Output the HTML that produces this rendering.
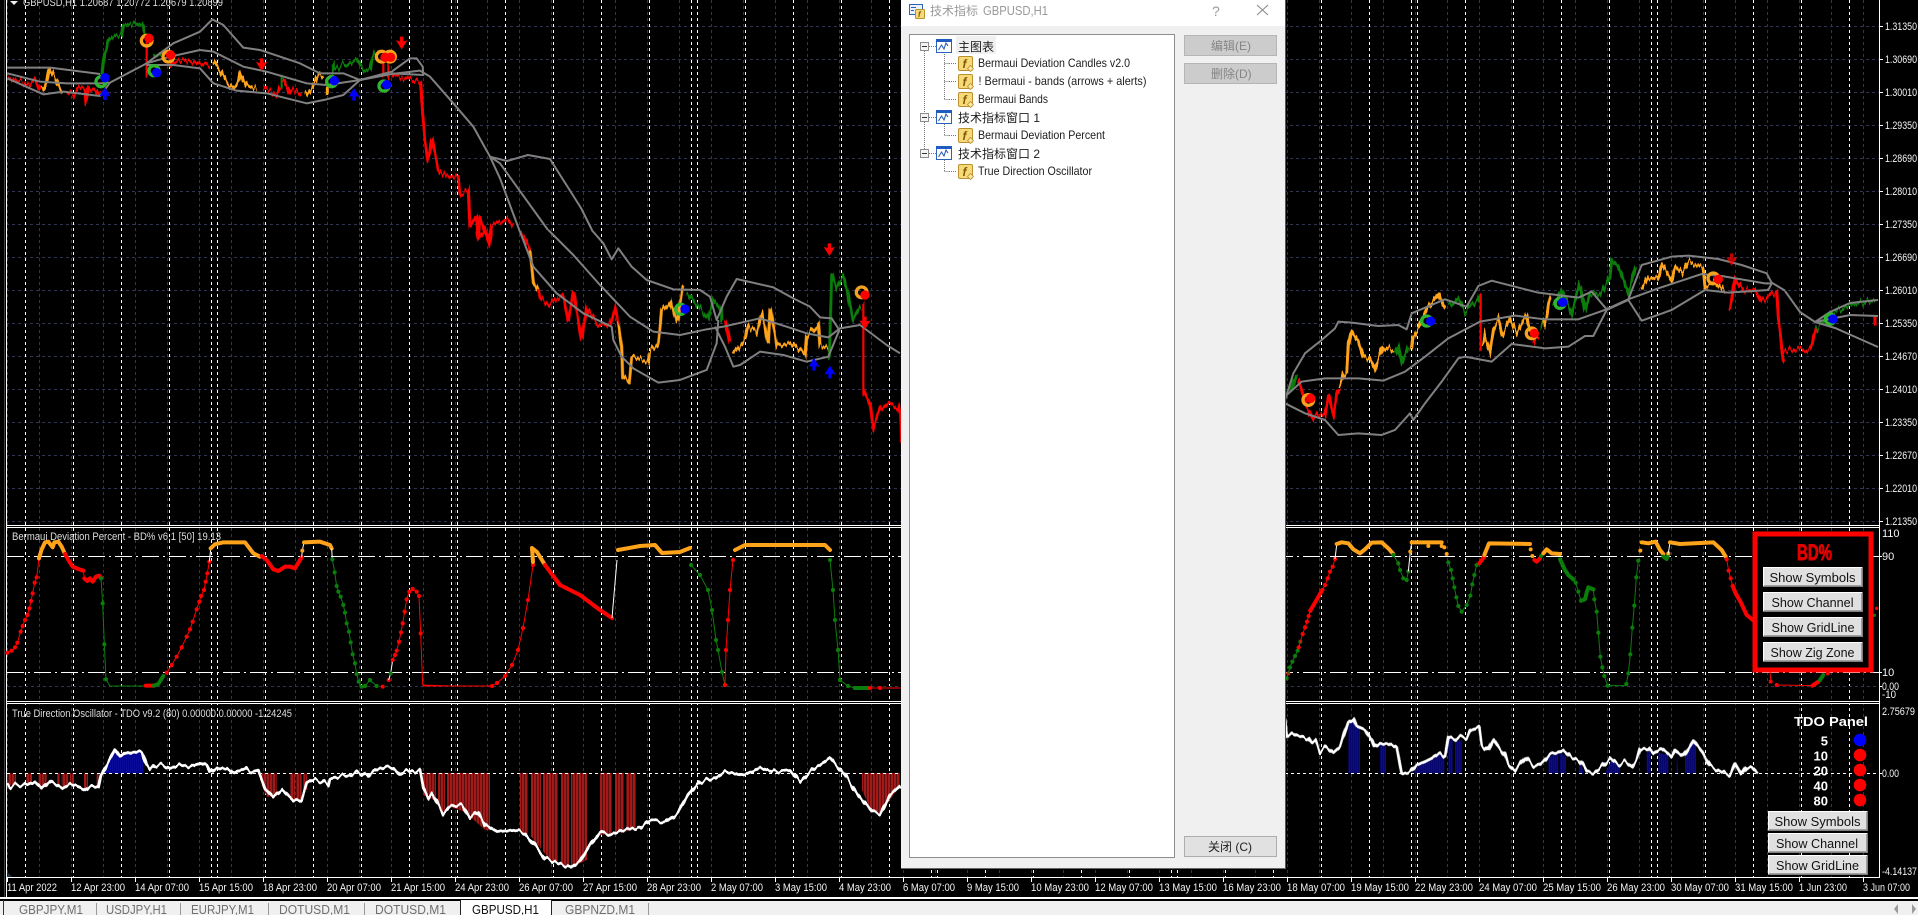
<!DOCTYPE html>
<html lang="zh"><head><meta charset="utf-8"><title>GBPUSD,H1</title>
<style>
html,body{margin:0;padding:0;background:#000;overflow:hidden}
svg{display:block}
text{font-family:"Liberation Sans","Noto Sans CJK SC",sans-serif}
.a{font-size:11px;fill:#f4f4f4}
.h{font-size:11px;fill:#dcdcdc}
.tr{font-size:12px;fill:#1c1c1c}
.bt{font-size:13px;fill:#111}
.pb{font-size:13px;font-weight:bold;fill:#fff}
.tb{font-size:13px;fill:#6f6f6f}
.c{fill:none;stroke-width:9;stroke-linejoin:miter}
.v{fill:none;stroke-width:6.5}
.cT{fill:none;stroke-width:3}
.r{stroke:#f00}.o{stroke:#ffa31a}.g{stroke:#0b7d0b}.w{stroke:#fff}
.b{fill:none;stroke:#808080;stroke-width:6;stroke-linejoin:round}
.bT{fill:none;stroke:#808080;stroke-width:2}
.t{fill:none;stroke-width:3}
.T{fill:none;stroke-width:1}
.k{fill:none;stroke-width:12;stroke-linecap:round;stroke-linejoin:round}
.K{fill:none;stroke-width:4;stroke-linecap:round;stroke-linejoin:round}
.mr{marker:url(#mr)}.mg{marker:url(#mg)}.mo{marker:url(#mo)}
.wl{fill:none;stroke:#fff;stroke-width:8.5;stroke-linejoin:round}
.wlT{fill:none;stroke:#fff;stroke-width:2.8;stroke-linejoin:round}
</style></head><body>
<svg xmlns="http://www.w3.org/2000/svg" width="1918" height="915" viewBox="0 0 1918 915">
<defs>
<pattern id="vb" patternUnits="userSpaceOnUse" x="7" y="0" width="32" height="6"><rect width="1" height="3" fill="#30364f"/></pattern>
<pattern id="hb" patternUnits="userSpaceOnUse" x="0" y="26" width="6" height="33"><rect width="3" height="1" fill="#30364f"/></pattern>
<pattern id="vw" patternUnits="userSpaceOnUse" x="25" y="0" width="48" height="6"><rect width="1" height="3" fill="#fff"/></pattern>
<pattern id="vw2" patternUnits="userSpaceOnUse" x="211" y="0" width="240" height="6"><rect width="1" height="3" fill="#fff"/></pattern>
<pattern id="tk" patternUnits="userSpaceOnUse" x="7" y="877" width="64" height="5"><rect width="1" height="5" fill="#fff"/></pattern>
<pattern id="rb" patternUnits="userSpaceOnUse" width="3" height="4"><rect width="2" height="4" fill="#a01a1a"/><rect x="2" width="1" height="4" fill="#5a0e0e"/></pattern>
<pattern id="bb" patternUnits="userSpaceOnUse" width="2" height="4"><rect width="2" height="4" fill="#0a0a9a"/><rect x="1" width="1" height="4" fill="#06066e"/></pattern>
<pattern id="rbz" patternUnits="userSpaceOnUse" width="9" height="12"><rect width="6" height="12" fill="#a01a1a"/><rect x="6" width="3" height="12" fill="#5a0e0e"/></pattern>
<pattern id="bbz" patternUnits="userSpaceOnUse" width="6" height="12"><rect width="3" height="12" fill="#0a0a9a"/><rect x="3" width="3" height="12" fill="#06066e"/></pattern>
<marker id="mr" markerWidth="5" markerHeight="5" refX="2.5" refY="2.5"><circle cx="2.5" cy="2.5" r="2.1" fill="#f00"/></marker>
<marker id="mg" markerWidth="5" markerHeight="5" refX="2.5" refY="2.5"><circle cx="2.5" cy="2.5" r="2.1" fill="#0b7d0b"/></marker>
<marker id="mo" markerWidth="5" markerHeight="5" refX="2.5" refY="2.5"><circle cx="2.5" cy="2.5" r="2.1" fill="#ffa31a"/></marker>
<filter id="j" filterUnits="userSpaceOnUse" x="0" y="0" width="1918" height="530" color-interpolation-filters="sRGB"><feTurbulence type="fractalNoise" baseFrequency="0.45 0.004" numOctaves="1" seed="4"/><feColorMatrix type="matrix" values="1 0 0 0 0  0 0 0 0 .5  0 0 0 0 .5  0 0 0 0 1" result="n"/><feDisplacementMap in="SourceGraphic" in2="n" scale="16" xChannelSelector="G" yChannelSelector="R"/></filter>
<filter id="j2" filterUnits="userSpaceOnUse" x="0" y="700" width="1918" height="180" color-interpolation-filters="sRGB"><feTurbulence type="fractalNoise" baseFrequency="0.22 0.004" numOctaves="1" seed="9"/><feColorMatrix type="matrix" values="1 0 0 0 0  0 0 0 0 .5  0 0 0 0 .5  0 0 0 0 1" result="n"/><feDisplacementMap in="SourceGraphic" in2="n" scale="9" xChannelSelector="G" yChannelSelector="R"/></filter>
<g id="bu"><circle r="15" fill="none" stroke="#2fb52f" stroke-width="10"/></g>
<g id="be"><circle r="16" fill="none" stroke="#f5a31e" stroke-width="10"/></g>
<path id="ad" fill="#f00" d="M-5,-20H5V-6L17,-9L0,18L-17,-9L-5,-6Z"/>
<path id="au" fill="#00f" d="M-5,20H5V6L17,9L0,-18L-17,9L-5,6Z"/>
<g id="btn"><rect width="100" height="20" fill="#808080"/><rect width="99" height="19" fill="#fff"/><rect x="1" y="1" width="98" height="18" fill="#a0a0a0"/><rect x="1" y="1" width="97" height="17" fill="#e0e0e0"/></g>
<g id="fi"><rect x="0.5" y="0.5" width="14" height="14" rx="1.5" fill="#f8d977" stroke="#b8912e"/><text x="4.5" y="12" font-size="12" font-style="italic" font-weight="bold" fill="#7d5d0c">f</text><path d="M12.5,9.5l3,3l-3,3l-3,-3z" fill="#fbe8a8" stroke="#b8912e" stroke-width=".8"/></g>
<g id="fo"><rect x="0.5" y="0.5" width="15" height="13" fill="#fff" stroke="#2a62b8"/><rect x="0" y="0" width="16" height="3" fill="#1f5cc0"/><path d="M2.5,11l3,-5l2.5,4l2,-6l2,3" fill="none" stroke="#2a62b8" stroke-width="1.1"/></g>
<g id="ex"><rect x="0.5" y="0.5" width="8" height="8" fill="#f4f4f4" stroke="#8c8c8c"/><rect x="2" y="4" width="5" height="1" fill="#333"/></g>
</defs>

<rect width="1918" height="915" fill="#000"/>
<rect x="4" y="0" width="1" height="897" fill="#444"/><rect x="6" y="0" width="1" height="897" fill="#fff"/>

<rect x="7" y="0" width="1872" height="525" fill="url(#vb)"/>
<rect x="7" y="0" width="1872" height="525" fill="url(#hb)"/>
<rect x="7" y="0" width="1872" height="525" fill="url(#vw)"/>
<rect x="7" y="0" width="1872" height="525" fill="url(#vw2)"/>
<rect x="7" y="528" width="1872" height="173" fill="url(#vb)"/>
<rect x="7" y="528" width="1872" height="173" fill="url(#vw)"/>
<rect x="7" y="528" width="1872" height="173" fill="url(#vw2)"/>
<path d="M7,686.5H1879" stroke="#30364f" stroke-dasharray="3 3"/>
<path d="M7,556.5H1879M7,672.5H1879" stroke="#fff" stroke-dasharray="17 4 2 4"/>
<rect x="7" y="704" width="1872" height="173" fill="url(#vb)"/>
<rect x="7" y="704" width="1872" height="173" fill="url(#vw)"/>
<rect x="7" y="704" width="1872" height="173" fill="url(#vw2)"/>

<!-- MAIN candles -->
<g filter="url(#j)">
<g transform="scale(.33333)">
<path class="c r" d="M22,232L50,240 70,245 90,255 105,240 115,262 125,272"/>
<path class="c o" d="M125,272 135,260 148,205 165,230 185,272"/>
<path class="c r" d="M200,280 220,285 235,265 255,270 258,315 265,270 285,265 300,285"/>
<path class="c g" d="M305,240 310,180 325,120 345,108 365,105 370,75 400,70 430,75 432,100"/>
<path class="v r" d="M440,120V225"/>
<path class="c g" d="M460,170 490,160"/>
<path class="c r" d="M510,210 520,185 560,183 600,192 630,195"/>
<path class="c o" d="M640,185 660,215 680,245 700,265 712,255 722,220 740,255 770,265"/>
<path class="c r" d="M790,265 830,285 840,260"/>
<path class="v g" d="M845,220V260"/>
<path class="c r" d="M850,235 870,280 880,270 905,285"/>
<path class="c o" d="M915,288 935,265 955,225 970,235M982,260V285"/>
<path class="c g" d="M1000,185V210L1030,195 1070,180 1090,210 1110,210 1120,165 1135,155"/>
<path class="v r" d="M1150,175V235M1165,190V240"/>
<path class="c r" d="M1175,225L1210,238 1262,245 1268,340 1275,420 1285,480 1295,420 1315,510 1340,530 1375,530 1380,580 1405,570 1410,680 1430,650 1435,715 1440,650 1465,725 1475,675 1500,665 1521,660 1540,678"/>
</g>
<g transform="translate(440 230) scale(.33333)">
<path class="c r" d="M110,0 115,25 135,0 148,38 155,0M240,0 260,40 270,60"/>
<path class="c o" d="M270,60 280,155 295,180"/>
<path class="c r" d="M295,180 300,205 325,225 345,210 370,200 385,270 400,185 425,330 440,235 470,280 510,285 525,235 535,280"/>
<path class="c o" d="M535,280 545,350 548,440 568,460 575,390 590,385 625,390 630,360 655,340 665,240 690,215 712,280 728,170"/>
<path class="c g" d="M740,190 770,225 805,265 820,210 845,240 845,280"/>
<path class="c r" d="M855,265 870,340"/>
<path class="c o" d="M878,370 915,330 925,290 950,305 965,250 985,340 990,235 1010,345 1050,335 1095,375 1100,315 1135,280 1140,350 1165,350"/>
<path class="c g" d="M1168,380 1175,130 1190,170 1210,140 1220,175 1238,270 1262,230"/>
<path class="v r" d="M1270,215V480"/>
<path class="c r" d="M1270,480 1290,520 1300,590 1320,540 1345,520 1375,530 1382,560 1385,640"/>
</g>
<g transform="translate(1285 250) scale(.33333)">
<path class="v g" d="M0,360V440"/><path class="c g" d="M15,430 35,370"/>
<path class="c r" d="M40,390 55,440 70,480 85,510 100,495 120,495 130,435 145,500 155,430 165,415"/>
<path class="c o" d="M165,410 175,375 185,370 190,280 200,240 220,270 235,320 255,330 268,355 285,310 295,285 325,305"/>
<path class="c g" d="M330,310 340,285 350,335 370,285"/>
<path class="c o" d="M378,300 385,260 400,240 420,190 430,170 460,130 480,175"/>
<path class="c g" d="M490,170 520,145 540,185 580,150 583,135"/>
<path class="v r" d="M587,135V305"/>
<path class="c o" d="M595,290 600,260 615,300 625,235 640,210 650,255 675,210 695,245 725,195 735,240"/>
<path class="c r" d="M745,280 760,250"/>
<path class="v g" d="M770,215V235"/>
<path class="c o" d="M775,230 785,195 795,140"/>
<path class="c g" d="M805,170 830,120 860,190 885,100 900,185 915,130 945,135 975,80 980,30 1000,50 1030,130 1052,50"/>
<path class="c o" d="M1070,115 1090,80 1120,85 1130,45 1160,90 1170,50 1190,70 1210,35 1255,55 1260,110 1290,95 1320,125"/>
<path class="c r" d="M1335,180 1350,85 1375,120 1410,120 1430,155 1475,125 1480,200 1495,330"/>
</g>
<path class="cT r" d="M1783,349 1811,349 1816,330"/>
<path class="cT g" d="M1816,330 1830,315 1850,305 1875,300"/>
<path class="cT r" d="M1875,315V325"/>
</g>

<!-- MAIN bands -->
<g transform="scale(.33333)">
<path class="b" d="M22,203 150,203 230,213 300,222"/>
<path class="b" d="M22,220 120,245 200,250 300,250 330,248 440,190"/>
<path class="b" d="M22,235 130,283 190,275 300,288 330,248"/>
<path class="b" d="M440,190 520,130 600,95 637,58 670,75 730,143 780,150 900,190 960,220 1030,220 1080,240"/>
<path class="b" d="M440,190 510,170 600,150 640,155 730,200 800,215 920,250 980,255 1080,240 1175,222 1260,212 1290,230 1360,310 1420,380 1470,470 1521,483 1584,465 1650,477 1743,624 1776,690"/>
<path class="b" d="M440,195 520,195 600,205 640,250 710,272 800,280 920,310 980,298 1030,285 1080,240 1175,215 1230,175 1250,175 1268,200 1270,225 1175,220"/>
<path class="b" d="M1470,470 1500,535 1560,696M1470,470 1500,490 1644,690"/>
</g>
<g transform="translate(440 230) scale(.33333)">
<path class="b" d="M325,0 400,75 480,165 570,260 640,305 720,315 800,298 850,290 960,265 1040,290 1100,310 1165,322 1200,295 1260,285 1340,345 1380,370"/>
<path class="b" d="M455,0 490,40 515,88 535,55 575,110 620,150 700,178 780,180 810,200 830,270 860,200 890,147 1000,172 1060,205 1110,230 1140,262 1175,265 1198,300 1165,380 1100,395 1030,375 960,365 900,405 880,410 855,350 825,290"/>
<path class="b" d="M240,5 280,110 350,190 430,250 515,290 520,330 545,380 580,415 655,458 720,450 800,420 830,340 835,270"/>
</g>
<g transform="translate(1285 250) scale(.33333)">
<path class="b" d="M0,450 25,370 60,310 110,270 150,235 160,215 200,218 280,228 340,225 365,238 380,190 480,148 545,170 580,108 620,92 760,128 880,143 920,125 965,178 1030,148 1070,45 1160,20 1210,17 1300,27 1370,45 1445,70 1460,98 1500,122"/>
<path class="b" d="M0,440 50,395 120,385 220,385 295,392 360,365 420,320 490,265 585,215 690,197 780,208 880,208 965,178 1030,148 1120,115 1250,72 1310,78 1440,100 1460,100"/>
<path class="b" d="M0,460 60,490 120,510 160,555 220,550 290,555 330,540 375,490 385,510 420,460 470,395 520,325 540,320 620,335 680,282 780,295 850,290 900,258 925,258 965,180 1030,150 1070,212 1160,180 1260,120 1330,128 1450,120 1460,100"/>
</g>
<path class="bT" d="M1785,291 1800,312 1815,322 1830,312 1850,303 1878,300M1815,322 1850,315 1878,316M1815,322 1835,328 1878,347"/>

<!-- MAIN markers -->
<g transform="scale(.33333)">
<use href="#bu" x="303" y="245"/><circle cx="315" cy="233" r="14" fill="#00f"/>
<use href="#bu" x="462" y="212"/><circle cx="470" cy="218" r="14" fill="#00f"/>
<use href="#bu" x="995" y="245"/><circle cx="1003" cy="242" r="14" fill="#00f"/>
<use href="#bu" x="1152" y="258"/><circle cx="1160" cy="254" r="14" fill="#00f"/>
<use href="#be" x="440" y="122"/><circle cx="447" cy="115" r="14" fill="#f00"/>
<use href="#be" x="505" y="170"/><circle cx="512" cy="165" r="14" fill="#f00"/>
<use href="#be" x="1145" y="170"/><use href="#be" x="1170" y="170"/><circle cx="1155" cy="172" r="14" fill="#f00"/><circle cx="1172" cy="172" r="14" fill="#f00"/>
<use href="#ad" x="785" y="195"/><use href="#ad" x="1205" y="130"/>
<use href="#au" x="315" y="280"/><use href="#au" x="1062" y="282"/>
</g>
<g transform="translate(440 230) scale(.33333)">
<use href="#bu" x="722" y="238"/><circle cx="735" cy="237" r="14" fill="#00f"/>
<use href="#be" x="1265" y="187"/><circle cx="1275" cy="195" r="14" fill="#f00"/>
<use href="#ad" x="1168" y="60"/><use href="#ad" x="1275" y="280"/>
<use href="#au" x="1122" y="402"/><use href="#au" x="1170" y="425"/>
</g>
<g transform="translate(1285 250) scale(.33333)">
<use href="#be" x="70" y="450"/><circle cx="77" cy="445" r="14" fill="#f00"/>
<use href="#bu" x="425" y="213"/><circle cx="437" cy="214" r="14" fill="#00f"/>
<use href="#be" x="740" y="250"/><circle cx="748" cy="250" r="14" fill="#f00"/>
<use href="#bu" x="825" y="160"/><circle cx="833" cy="157" r="14" fill="#00f"/>
<use href="#be" x="1285" y="85"/><circle cx="1300" cy="88" r="14" fill="#f00"/>
<use href="#ad" x="1340" y="30" opacity=".75"/>
</g>
<g transform="translate(1833 319) scale(.33333)"><use href="#bu" x="-8" y="0"/><circle cx="0" cy="0" r="14" fill="#00f"/></g>

<!-- PANE 2 lines -->
<g transform="translate(0 510) scale(.33333)">
<path class="t r mr" d="M22,428 35,422 45,412 52,398 62,365 68,348 75,330 82,315 88,295 93,273 98,250 104,218 110,202 117,145"/>
<path class="k o" d="M117,145 125,118 135,97 145,95 158,112 163,97 175,95 185,110 195,132"/>
<path class="k r" d="M195,132 205,150 218,170 235,177 250,182"/>
<path class="t r" d="M250,182 253,205"/>
<path class="k r" d="M253,205 262,213 270,205 278,215 288,200 298,197 303,203"/>
<path class="t g mg" d="M303,205 308,280 313,403 318,508"/><path class="t g" d="M318,508 330,528H432"/>
<path class="k r" d="M437,527H462"/><path class="k g" d="M462,527 475,522 490,498"/>
<path class="t r mr" d="M500,488 515,465 530,440 545,412 560,380 570,358 578,335 590,298 598,275 603,258 612,240 617,215 622,190 628,155"/>
<path class="t w" d="M628,155 632,118"/>
<path class="k o" d="M632,115 645,103 670,97H735L760,130 780,140"/>
<path class="k r" d="M785,138 800,150 820,178 835,183 855,170 870,170 885,175 905,142"/>
<path class="t w" d="M905,142 907,122 912,97"/><circle cx="907" cy="122" r="6" fill="#ffa31a"/>
<path class="k o" d="M912,97 960,95 990,105 995,115"/>
<path class="t w" d="M995,115 997,148"/>
<path class="t g mg" d="M997,148 1004,187 1010,228 1015,245 1022,260 1030,285 1035,308 1040,340 1047,365 1052,397 1058,433 1065,460 1070,492 1076,515 1085,530 1095,528 1110,510 1130,528"/>
<circle cx="1148" cy="530" r="6" fill="#f00"/><circle cx="1166" cy="510" r="6" fill="#f00"/>
<path class="t w" d="M1166,510 1172,490 1178,450"/><circle cx="1172" cy="490" r="6" fill="#0b7d0b"/>
<path class="t r mr" d="M1178,450 1185,435 1190,422 1197,395 1203,367 1208,340 1214,305 1220,268 1228,245 1238,237 1250,245 1257,258 1262,370"/>
<path class="t r" d="M1262,370 1268,525 1350,528"/>
</g>
<g>
<path class="T r" d="M423,686H492"/>
<path class="T r mr" d="M492,686 497,683 505,676 512,665 518,650 523,628 528,600 533,565"/>
<path class="K o" d="M533,562 532,548 537,552 545,565"/>
<path class="K r" d="M545,565 560,585 580,595 600,610 612,618"/>
<path class="T w" d="M612,618 617,560"/>
<path class="K o" d="M618,550 640,546 655,545 662,553 680,552 690,548"/>
<path class="T g mg" d="M691,565 700,575 708,590 712,610 716,640 718,650 722,672 725,685"/>
<path class="T r mr" d="M725,685 726,650 728,620 730,590 733,560"/>
<path class="K o" d="M735,550 745,545H825L830,550"/>
<path class="T g mg" d="M830,560 833,590 835,620 838,650 840,680 848,686 855,688"/>
<path class="K g" d="M855,688H868"/>
<path class="T r mr" d="M870,688H880"/><path class="T r" d="M880,688H901"/>
</g>
<g transform="translate(1285 530) scale(.33333)">
<circle cx="10" cy="430" r="6" fill="#f00"/>
<path class="t g mg" d="M5,445 15,412 22,395 30,378 38,362 46,335"/>
<path class="t r mr" d="M41,352 53,312 60,292 66,275 71,258 76,242"/>
<path class="k r" d="M76,242 112,180"/>
<path class="t r mr" d="M112,180 120,165 128,145 135,125 143,110 150,87"/>
<path class="t w" d="M150,87 155,45"/>
<path class="k o" d="M155,42 170,37 190,40 205,58 225,70 240,58 260,38 290,37 310,55 325,72"/>
<path class="t g mg" d="M325,75 340,100 345,120 355,145 365,150 370,124"/>
<path class="t w" d="M370,124 376,65 380,38"/><circle cx="376" cy="65" r="6" fill="#ffa31a"/>
<path class="k o" d="M380,37H470"/><circle cx="430" cy="48" r="6" fill="#ffa31a"/><circle cx="470" cy="48" r="6" fill="#ffa31a"/><circle cx="478" cy="52" r="6" fill="#ffa31a"/><circle cx="485" cy="72" r="6" fill="#ffa31a"/>
<path class="t g mg" d="M490,97 498,120 503,145 508,172 514,202 520,228 530,245 545,225 556,197 562,163 568,135 575,105"/>
<path class="k r" d="M583,100 598,80"/>
<path class="k o" d="M598,75 612,40 735,42"/><circle cx="737" cy="58" r="6" fill="#ffa31a"/><circle cx="742" cy="78" r="6" fill="#ffa31a"/>
<path class="k r" d="M748,90 755,95 765,85"/>
<circle cx="768" cy="78" r="6" fill="#0b7d0b"/>
<path class="k o" d="M775,70 785,58 800,70 825,72"/>
<path class="k g" d="M825,88 840,120 850,135 865,148"/>
<path class="t g mg" d="M865,148 872,158 880,185 888,212"/>
<path class="k g" d="M888,212 900,208 905,188 910,172 925,178"/>
<path class="t g mg" d="M925,178 928,208 935,245 940,308 946,380 952,412 958,438 968,467"/>
<path class="t g" d="M968,467H1024"/>
<path class="t g mg" d="M1024,462 1030,430 1036,373 1042,293 1048,227 1054,142 1060,92"/>
<circle cx="1066" cy="62" r="6" fill="#ffa31a"/>
<path class="k o" d="M1070,37 1090,40 1112,35 1125,60 1135,72"/>
<path class="k g" d="M1135,80 1145,87 1150,72"/>
<circle cx="1150" cy="70" r="6" fill="#ffa31a"/><path class="t w" d="M1150,70 1155,37"/>
<path class="k o" d="M1155,37 1185,42 1285,37 1310,60 1322,80"/>
<path class="t r mr" d="M1325,88 1331,122 1337,145 1343,168"/>
<path class="k r" d="M1343,168 1352,190 1368,218 1385,255 1410,275"/>
</g>
<g transform="translate(1720 510) scale(.33333)">
<path class="t r" d="M150,480 152,515"/><circle cx="152" cy="515" r="6" fill="#f00"/><circle cx="170" cy="525" r="6" fill="#f00"/>
<path class="t r" d="M170,525 277,527"/><path class="k r" d="M277,527 295,515"/><path class="k g" d="M300,510 310,495"/><circle cx="323" cy="490" r="6" fill="#f00"/>
<circle cx="470" cy="295" r="5" fill="#f00"/><circle cx="463" cy="316" r="5" fill="#0b7d0b"/>
</g>

<!-- PANE 3 bars -->
<g transform="translate(0 700) scale(.33333)">
<path fill="url(#rbz)" d="M22,220H48V256H22ZM78,220H96V252H78ZM115,220H140V262H115ZM172,220H180V258H172ZM185,220H205V262H185ZM210,220H222V255H210ZM252,220H264V268H252ZM290,220H298V262H290ZM785,220H830V290H800L785,255ZM870,220H885V300H870ZM888,220H905V298H888ZM910,220H922V270H910ZM1268,220H1350V320L1330,340 1310,305 1295,280 1285,295 1270,265Z"/>
<path fill="url(#bbz)" d="M305,220 320,195 345,150 360,172 375,160 400,162 425,155 432,220Z"/>
<path fill="#2a3a5a" d="M22,518 36,530H22Z"/>
</g>
<path fill="url(#rb)" d="M423,773V795L450,807 465,812 485,830 490,830V773ZM520,773V832L530,835 550,860 570,868 587,860V773ZM600,773V835L625,832 636,828V773ZM862,773V790L870,808 880,815 900,785V773Z"/>
<path fill="#000" d="M436,773h2v40h-2zM445,773h2v40h-2zM528,773h3v70h-3zM541,773h2v80h-2zM558,773h3v100h-3zM569,773h2v100h-2zM612,773h3v70h-3zM624,773h2v70h-2z"/>
<g transform="translate(1285 530) scale(.33333)">
<path fill="url(#bbz)" d="M190,730V580L205,568 225,590V730ZM285,730V642L303,650V730ZM385,730 405,700 430,695 465,672 478,680V730ZM490,730V625L503,630V730ZM510,730V632H530V730ZM790,730V680L820,670V730ZM825,730V665L843,680V730ZM880,730 885,695 897,730ZM960,730 980,688 1005,710V730ZM1085,730V660L1097,668V730ZM1120,730V668L1150,675V730ZM1175,730V672L1180,730ZM1200,730V680L1225,635 1233,650V730Z"/>
</g>
<path d="M7,773.5H1879" stroke="#fff" stroke-dasharray="3 3"/>

<!-- PANE 3 white line -->
<g filter="url(#j2)">
<g transform="translate(0 700) scale(.33333)">
<path class="wl" d="M22,250 30,262 45,255 60,257 85,252 105,245 125,263 148,243 165,252 190,265 210,255 230,258 255,268 270,257 295,262 303,225 320,195 345,148 360,170 375,158 400,160 425,152 440,195 450,208 465,195 490,195 510,205 545,195 570,200 605,188 620,195 630,218 650,205 680,205 700,218 735,205 750,218 775,212 795,265 820,290 845,270 880,305 905,298 920,250 935,240 965,243 985,255 990,235 1020,228 1050,227 1075,215 1100,230 1120,212 1160,200 1180,205 1200,225 1215,215 1260,212 1270,265 1285,295 1295,280 1310,305 1330,340 1350,320"/>
</g>
<path class="wlT" d="M450,807 462,805 470,818 478,812 485,825 497,832 512,830 525,833 535,845 545,860 555,862 570,868 580,862 590,845 600,832 612,835 625,830 640,828 650,820 665,822 678,812 688,795 700,782 715,778 725,772 745,775 760,768 775,772 790,770 800,782 812,770 830,758 845,775 858,795 872,812 880,815 890,795 901,785"/>
<g transform="translate(1285 530) scale(.33333)">
<path class="wl" d="M0,565 5,620 20,610 35,618 50,620 70,625 80,640 92,632 105,665 125,650 145,668 165,650 175,620 190,575 205,565 215,590 240,600 260,630 268,652 285,640 310,640 335,652 350,730 375,728 395,705 420,695 440,685 465,668 480,680 490,620 510,630 525,618 545,625 555,602 575,592 583,595 590,645 610,662 625,628 640,650 660,675 670,705 690,722 720,682 745,708 765,703 780,690 795,672 815,668 835,660 860,685 880,688 895,705 905,725 925,730 945,715 975,685 1000,705 1020,695 1040,710 1055,690 1065,660 1090,652 1105,670 1130,655 1160,680 1170,660 1195,680 1225,632 1255,670 1275,708 1300,722 1335,735 1350,700 1370,735 1385,710 1400,712 1418,730"/>
</g>
</g>

<!-- frame lines -->
<rect x="7" y="525" width="1872" height="1" fill="#fff"/><rect x="7" y="527" width="1872" height="1" fill="#fff"/>
<rect x="7" y="701" width="1872" height="1" fill="#fff"/><rect x="7" y="703" width="1872" height="1" fill="#fff"/>
<rect x="7" y="877" width="1872" height="1" fill="#fff"/>
<rect x="1879" y="0" width="1" height="878" fill="#fff"/>
<rect x="7" y="877" width="1872" height="5" fill="url(#tk)"/>
<path d="M1879,26.5h4M1879,59.5h4M1879,92.5h4M1879,125.5h4M1879,158.5h4M1879,191.5h4M1879,224.5h4M1879,257.5h4M1879,290.5h4M1879,323.5h4M1879,356.5h4M1879,389.5h4M1879,422.5h4M1879,455.5h4M1879,488.5h4M1879,521.5h4M1879,556.5h3M1879,672.5h3M1879,686.5h3M1879,773.5h3" stroke="#fff"/>

<!-- titles -->
<path d="M10,1H18L14,5Z" fill="#eee"/>
<text class="h" x="23" y="6" textLength="200" lengthAdjust="spacingAndGlyphs">GBPUSD,H1  1.20687 1.20772 1.20679 1.20899</text>
<text class="h" x="12" y="540" textLength="209" lengthAdjust="spacingAndGlyphs">Bermaui Deviation Percent - BD% v6.1 [50] 19.13</text>
<text class="h" x="12" y="717" textLength="280" lengthAdjust="spacingAndGlyphs">True Direction Oscillator - TDO v9.2 (80) 0.00000 0.00000 -1.24245</text>

<!-- price axis -->
<text class="a" x="1885" y="30" textLength="32" lengthAdjust="spacingAndGlyphs">1.31350</text>
<text class="a" x="1885" y="63" textLength="32" lengthAdjust="spacingAndGlyphs">1.30690</text>
<text class="a" x="1885" y="96" textLength="32" lengthAdjust="spacingAndGlyphs">1.30010</text>
<text class="a" x="1885" y="129" textLength="32" lengthAdjust="spacingAndGlyphs">1.29350</text>
<text class="a" x="1885" y="162" textLength="32" lengthAdjust="spacingAndGlyphs">1.28690</text>
<text class="a" x="1885" y="195" textLength="32" lengthAdjust="spacingAndGlyphs">1.28010</text>
<text class="a" x="1885" y="228" textLength="32" lengthAdjust="spacingAndGlyphs">1.27350</text>
<text class="a" x="1885" y="261" textLength="32" lengthAdjust="spacingAndGlyphs">1.26690</text>
<text class="a" x="1885" y="294" textLength="32" lengthAdjust="spacingAndGlyphs">1.26010</text>
<text class="a" x="1885" y="327" textLength="32" lengthAdjust="spacingAndGlyphs">1.25350</text>
<text class="a" x="1885" y="360" textLength="32" lengthAdjust="spacingAndGlyphs">1.24670</text>
<text class="a" x="1885" y="393" textLength="32" lengthAdjust="spacingAndGlyphs">1.24010</text>
<text class="a" x="1885" y="426" textLength="32" lengthAdjust="spacingAndGlyphs">1.23350</text>
<text class="a" x="1885" y="459" textLength="32" lengthAdjust="spacingAndGlyphs">1.22670</text>
<text class="a" x="1885" y="492" textLength="32" lengthAdjust="spacingAndGlyphs">1.22010</text>
<text class="a" x="1885" y="525" textLength="32" lengthAdjust="spacingAndGlyphs">1.21350</text>
<text class="a" x="1882" y="537">110</text>
<text class="a" x="1882" y="560">90</text>
<text class="a" x="1882" y="676">10</text>
<text class="a" x="1882" y="690" textLength="17" lengthAdjust="spacingAndGlyphs">0.00</text>
<text class="a" x="1882" y="698" textLength="14" lengthAdjust="spacingAndGlyphs">-10</text>
<text class="a" x="1882" y="715" textLength="33" lengthAdjust="spacingAndGlyphs">2.75679</text>
<text class="a" x="1882" y="777" textLength="17" lengthAdjust="spacingAndGlyphs">0.00</text>
<text class="a" x="1882" y="875" textLength="35" lengthAdjust="spacingAndGlyphs">-4.14137</text>

<!-- time axis -->
<text class="a" x="7" y="891" textLength="50" lengthAdjust="spacingAndGlyphs">11 Apr 2022</text>
<text class="a" x="71" y="891" textLength="54" lengthAdjust="spacingAndGlyphs">12 Apr 23:00</text>
<text class="a" x="135" y="891" textLength="54" lengthAdjust="spacingAndGlyphs">14 Apr 07:00</text>
<text class="a" x="199" y="891" textLength="54" lengthAdjust="spacingAndGlyphs">15 Apr 15:00</text>
<text class="a" x="263" y="891" textLength="54" lengthAdjust="spacingAndGlyphs">18 Apr 23:00</text>
<text class="a" x="327" y="891" textLength="54" lengthAdjust="spacingAndGlyphs">20 Apr 07:00</text>
<text class="a" x="391" y="891" textLength="54" lengthAdjust="spacingAndGlyphs">21 Apr 15:00</text>
<text class="a" x="455" y="891" textLength="54" lengthAdjust="spacingAndGlyphs">24 Apr 23:00</text>
<text class="a" x="519" y="891" textLength="54" lengthAdjust="spacingAndGlyphs">26 Apr 07:00</text>
<text class="a" x="583" y="891" textLength="54" lengthAdjust="spacingAndGlyphs">27 Apr 15:00</text>
<text class="a" x="647" y="891" textLength="54" lengthAdjust="spacingAndGlyphs">28 Apr 23:00</text>
<text class="a" x="711" y="891" textLength="52" lengthAdjust="spacingAndGlyphs">2 May 07:00</text>
<text class="a" x="775" y="891" textLength="52" lengthAdjust="spacingAndGlyphs">3 May 15:00</text>
<text class="a" x="839" y="891" textLength="52" lengthAdjust="spacingAndGlyphs">4 May 23:00</text>
<text class="a" x="903" y="891" textLength="52" lengthAdjust="spacingAndGlyphs">6 May 07:00</text>
<text class="a" x="967" y="891" textLength="52" lengthAdjust="spacingAndGlyphs">9 May 15:00</text>
<text class="a" x="1031" y="891" textLength="58" lengthAdjust="spacingAndGlyphs">10 May 23:00</text>
<text class="a" x="1095" y="891" textLength="58" lengthAdjust="spacingAndGlyphs">12 May 07:00</text>
<text class="a" x="1159" y="891" textLength="58" lengthAdjust="spacingAndGlyphs">13 May 15:00</text>
<text class="a" x="1223" y="891" textLength="58" lengthAdjust="spacingAndGlyphs">16 May 23:00</text>
<text class="a" x="1287" y="891" textLength="58" lengthAdjust="spacingAndGlyphs">18 May 07:00</text>
<text class="a" x="1351" y="891" textLength="58" lengthAdjust="spacingAndGlyphs">19 May 15:00</text>
<text class="a" x="1415" y="891" textLength="58" lengthAdjust="spacingAndGlyphs">22 May 23:00</text>
<text class="a" x="1479" y="891" textLength="58" lengthAdjust="spacingAndGlyphs">24 May 07:00</text>
<text class="a" x="1543" y="891" textLength="58" lengthAdjust="spacingAndGlyphs">25 May 15:00</text>
<text class="a" x="1607" y="891" textLength="58" lengthAdjust="spacingAndGlyphs">26 May 23:00</text>
<text class="a" x="1671" y="891" textLength="58" lengthAdjust="spacingAndGlyphs">30 May 07:00</text>
<text class="a" x="1735" y="891" textLength="58" lengthAdjust="spacingAndGlyphs">31 May 15:00</text>
<text class="a" x="1799" y="891" textLength="48" lengthAdjust="spacingAndGlyphs">1 Jun 23:00</text>
<text class="a" x="1863" y="891" textLength="47" lengthAdjust="spacingAndGlyphs">3 Jun 07:00</text>

<!-- BD panel -->
<rect x="1755" y="534" width="116" height="136" fill="#000" stroke="#f00" stroke-width="5"/>
<text x="1797" y="560" font-size="22" font-weight="bold" fill="#e00000" stroke="#e00000" stroke-width=".9" textLength="35" lengthAdjust="spacingAndGlyphs">BD%</text>
<use href="#btn" x="1763" y="567"/><use href="#btn" x="1763" y="592"/><use href="#btn" x="1763" y="617"/><use href="#btn" x="1763" y="642"/>
<text class="bt" x="1769.5" y="582" textLength="86" lengthAdjust="spacingAndGlyphs">Show Symbols</text>
<text class="bt" x="1771.5" y="607" textLength="82" lengthAdjust="spacingAndGlyphs">Show Channel</text>
<text class="bt" x="1771.5" y="632" textLength="83" lengthAdjust="spacingAndGlyphs">Show GridLine</text>
<text class="bt" x="1770.5" y="657" textLength="84" lengthAdjust="spacingAndGlyphs">Show Zig Zone</text>

<!-- TDO panel -->
<text class="pb" x="1794" y="726" textLength="74" lengthAdjust="spacingAndGlyphs">TDO Panel</text>
<text class="pb" x="1828" y="745.5" text-anchor="end">5</text>
<text class="pb" x="1828" y="760.5" text-anchor="end">10</text>
<text class="pb" x="1828" y="775.5" text-anchor="end">20</text>
<text class="pb" x="1828" y="790.5" text-anchor="end">40</text>
<text class="pb" x="1828" y="805.5" text-anchor="end">80</text>
<circle cx="1860" cy="740" r="6.3" fill="#00f"/><circle cx="1860" cy="755" r="6.3" fill="#f00"/><circle cx="1860" cy="770" r="6.3" fill="#f00"/><circle cx="1860" cy="785" r="6.3" fill="#f00"/><circle cx="1860" cy="800" r="6.3" fill="#f00"/>
<use href="#btn" x="1768" y="811"/><use href="#btn" x="1768" y="833"/><use href="#btn" x="1768" y="855"/>
<text class="bt" x="1774.5" y="826" textLength="86" lengthAdjust="spacingAndGlyphs">Show Symbols</text>
<text class="bt" x="1776" y="848" textLength="82" lengthAdjust="spacingAndGlyphs">Show Channel</text>
<text class="bt" x="1776" y="870" textLength="83" lengthAdjust="spacingAndGlyphs">Show GridLine</text>

<!-- bottom strip -->
<rect x="0" y="897" width="1918" height="2" fill="#fff"/>
<rect x="0" y="899" width="1918" height="2" fill="#000"/>
<rect x="0" y="901" width="1918" height="14" fill="#f0f0f0"/>
<rect x="3" y="900" width="1" height="15" fill="#333"/>
<rect x="461" y="900" width="90" height="15" fill="#fff"/>
<path d="M460.5,900V915M551.5,900V915" stroke="#222"/>
<path d="M96.5,903V915M180.5,903V915M268.5,903V915M364.5,903V915M648.5,903V915" stroke="#9a9a9a"/>
<text class="tb" x="19" y="914" textLength="64" lengthAdjust="spacingAndGlyphs">GBPJPY,M1</text>
<text class="tb" x="106" y="914" textLength="61" lengthAdjust="spacingAndGlyphs">USDJPY,H1</text>
<text class="tb" x="191" y="914" textLength="63" lengthAdjust="spacingAndGlyphs">EURJPY,M1</text>
<text class="tb" x="279" y="914" textLength="71" lengthAdjust="spacingAndGlyphs">DOTUSD,M1</text>
<text class="tb" x="375" y="914" textLength="71" lengthAdjust="spacingAndGlyphs">DOTUSD,M1</text>
<text x="472" y="914" font-size="13" fill="#111" textLength="67" lengthAdjust="spacingAndGlyphs">GBPUSD,H1</text>
<text class="tb" x="565" y="914" textLength="70" lengthAdjust="spacingAndGlyphs">GBPNZD,M1</text>
<path d="M1898,904V914L1894,909ZM1912,904V914L1916,909Z" fill="#9a9a9a"/>

<!-- DIALOG -->
<rect x="901" y="0" width="385" height="869" fill="#f0f0f0"/>
<rect x="901" y="0" width="384" height="26" fill="#fff"/>
<rect x="1285" y="0" width="1" height="869" fill="#555"/>
<rect x="901" y="868" width="385" height="1" fill="#666"/>
<g transform="translate(909 4)"><rect x="0.5" y="0.5" width="13" height="10" fill="#eaf2fb" stroke="#2a62b8"/><rect x="2" y="3" width="5" height="1" fill="#2a62b8"/><rect x="2" y="6" width="3" height="1" fill="#2a62b8"/><rect x="6.5" y="5.5" width="9" height="9" rx="1" fill="#f8d977" stroke="#b8912e"/><text x="9" y="13" font-size="8" font-style="italic" font-weight="bold" fill="#7d5d0c">f</text></g>
<text x="930" y="15" font-size="12" fill="#9a9a9a">技术指标</text>
<text x="983" y="15" font-size="13" fill="#9a9a9a" textLength="65" lengthAdjust="spacingAndGlyphs">GBPUSD,H1</text>
<text x="1212" y="16" font-size="14" fill="#9a9a9a">?</text>
<path d="M1257,5L1268,15M1268,5L1257,15" stroke="#8a8a8a" stroke-width="1.1" fill="none"/>

<rect x="909.5" y="34.5" width="265" height="823" fill="#fff" stroke="#8e8e8e"/>
<rect x="956" y="36" width="40" height="18" fill="#f0f0f0"/>
<path d="M924.5,51V113M924.5,122V149M944.5,52V99M944.5,122V135M944.5,158V171M929,46.5h7M949,63.5H956M949,81.5H956M949,99.5H956M929,117.5h7M949,135.5H956M929,153.5h7M949,171.5H956M944.5,63.5h5M944.5,81.5h5M944.5,99.5h5M944.5,135.5h5M944.5,171.5h5" stroke="#777" stroke-dasharray="1 1" fill="none"/>
<use href="#ex" x="920" y="42"/><use href="#ex" x="920" y="113"/><use href="#ex" x="920" y="149"/>
<use href="#fo" x="936" y="39"/><use href="#fo" x="936" y="110"/><use href="#fo" x="936" y="146"/>
<use href="#fi" x="958" y="56"/><use href="#fi" x="958" y="74"/><use href="#fi" x="958" y="92"/><use href="#fi" x="958" y="128"/><use href="#fi" x="958" y="164"/>
<text class="tr" x="958" y="51">主图表</text>
<text class="tr" x="978" y="67" textLength="152" lengthAdjust="spacingAndGlyphs">Bermaui Deviation Candles v2.0</text>
<text class="tr" x="978.5" y="85" textLength="168" lengthAdjust="spacingAndGlyphs">! Bermaui - bands (arrows + alerts)</text>
<text class="tr" x="978" y="103" textLength="70" lengthAdjust="spacingAndGlyphs">Bermaui Bands</text>
<text class="tr" x="958" y="122">技术指标窗口 1</text>
<text class="tr" x="978" y="139" textLength="127" lengthAdjust="spacingAndGlyphs">Bermaui Deviation Percent</text>
<text class="tr" x="958" y="158">技术指标窗口 2</text>
<text class="tr" x="978" y="175" textLength="114" lengthAdjust="spacingAndGlyphs">True Direction Oscillator</text>

<rect x="1184.5" y="35.5" width="92" height="20" fill="#cccccc" stroke="#b5b5b5"/>
<rect x="1184.5" y="63.5" width="92" height="20" fill="#cccccc" stroke="#b5b5b5"/>
<text x="1211" y="50" font-size="12" fill="#858585">编辑(E)</text>
<text x="1211" y="78" font-size="12" fill="#858585">删除(D)</text>
<rect x="1184.5" y="836.5" width="92" height="20" fill="#e1e1e1" stroke="#adadad"/>
<text x="1208" y="851" font-size="12" fill="#222">关闭 (C)</text>
</svg>
</body></html>
